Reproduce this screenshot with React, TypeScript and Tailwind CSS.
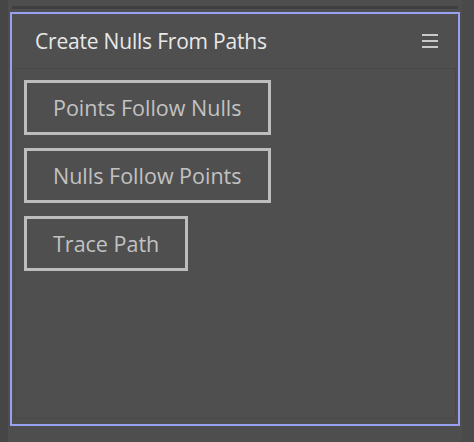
const font = { fontFamily: '"Open Sans", "Liberation Sans", sans-serif' };

function MenuIcon() {
  return (
    <svg width="16" height="14" viewBox="0 0 16 14" className="block">
      <rect x="0" y="0" width="16" height="2" fill="#c9c9c9" />
      <rect x="0" y="6" width="16" height="2" fill="#c9c9c9" />
      <rect x="0" y="12" width="16" height="2" fill="#c9c9c9" />
    </svg>
  );
}

function ActionButton({ label }: { label: string }) {
  return (
    <button className="h-[55px] self-start border-[3px] border-[#bdbdbd] px-[26px] text-[21.5px] leading-none text-[#c2c2c2]">
      {label}
    </button>
  );
}

export default function App() {
  return (
    <div className="flex h-[442px] w-[474px] bg-[#4e4e4e]" style={font}>
      <div className="w-[8px] bg-[#464646]" />
      <div className="flex w-[454px] flex-col">
        <div className="h-[6px]" />
        <div className="mx-[4px] h-[3px] bg-[#3f3f3f]" />
        <div className="h-[3px]" />
        <div className="mx-[2px] flex h-[414px] flex-col border-2 border-[#99a0f2] bg-[#4f4f4f]">
          <div className="flex h-[54px] shrink-0 items-center justify-between pl-[23px] pr-[20px]">
            <span className="text-[21px] leading-none tracking-[-0.2px] text-[#e8e8e8]">Create Nulls From Paths</span>
            <MenuIcon />
          </div>
          <div className="mx-[2px] mb-[5px] flex flex-1 flex-col gap-[13px] border border-[#494949] px-[9px] pt-[11px]">
            <ActionButton label="Points Follow Nulls" />
            <ActionButton label="Nulls Follow Points" />
            <ActionButton label="Trace Path" />
          </div>
        </div>
      </div>
      <div className="flex-1 bg-[#4a4a4a]" />
    </div>
  );
}
